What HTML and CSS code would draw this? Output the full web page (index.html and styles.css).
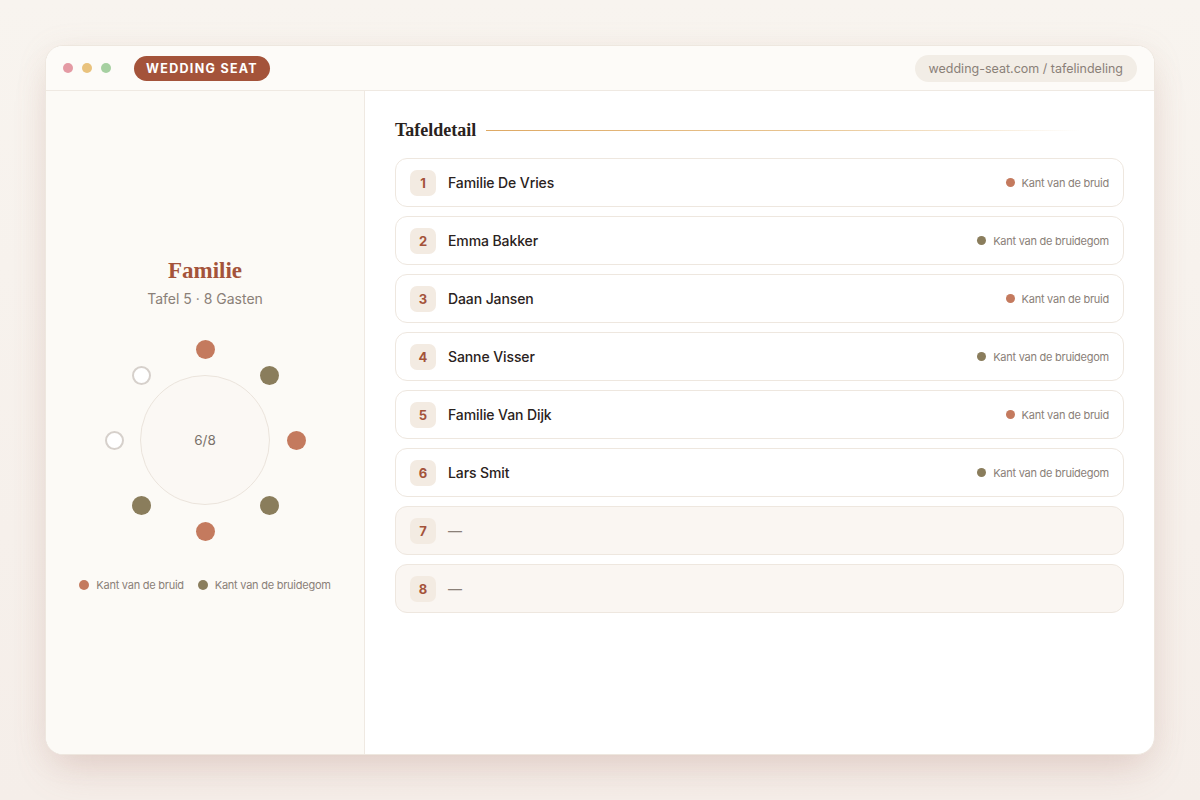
FILE: index.html
```html
<!DOCTYPE html>
<html lang="nl">
<head>
<meta charset="utf-8">
<title>Wedding Seat – Tafelindeling</title>
<link rel="stylesheet" href="styles.css">
</head>
<body>
<div class="window">
  <header class="topbar">
    <div class="dots">
      <span class="dot dot-red"></span>
      <span class="dot dot-yellow"></span>
      <span class="dot dot-green"></span>
    </div>
    <div class="brand">WEDDING SEAT</div>
    <div class="url">wedding-seat.com / tafelindeling</div>
  </header>
  <div class="content">
    <aside class="sidebar">
      <h2 class="table-title">Familie</h2>
      <div class="table-sub">Tafel 5 · 8 Gasten</div>
      <div class="diagram">
        <div class="table-circle">6/8</div>
        <span class="seat bride s-top"></span>
        <span class="seat groom s-tr"></span>
        <span class="seat bride s-right"></span>
        <span class="seat groom s-br"></span>
        <span class="seat bride s-bottom"></span>
        <span class="seat groom s-bl"></span>
        <span class="seat empty s-left"></span>
        <span class="seat empty s-tl"></span>
      </div>
      <div class="legend">
        <span class="legend-item"><span class="ldot bride"></span>Kant van de bruid</span>
        <span class="legend-item"><span class="ldot groom"></span>Kant van de bruidegom</span>
      </div>
    </aside>
    <main class="main">
      <div class="section-head">
        <h3>Tafeldetail</h3>
        <span class="head-line"></span>
      </div>
      <ul class="rows">
        <li class="row"><span class="num">1</span><span class="name">Familie De Vries</span><span class="side"><span class="sdot bride"></span>Kant van de bruid</span></li>
        <li class="row"><span class="num">2</span><span class="name">Emma Bakker</span><span class="side"><span class="sdot groom"></span>Kant van de bruidegom</span></li>
        <li class="row"><span class="num">3</span><span class="name">Daan Jansen</span><span class="side"><span class="sdot bride"></span>Kant van de bruid</span></li>
        <li class="row"><span class="num">4</span><span class="name">Sanne Visser</span><span class="side"><span class="sdot groom"></span>Kant van de bruidegom</span></li>
        <li class="row"><span class="num">5</span><span class="name">Familie Van Dijk</span><span class="side"><span class="sdot bride"></span>Kant van de bruid</span></li>
        <li class="row"><span class="num">6</span><span class="name">Lars Smit</span><span class="side"><span class="sdot groom"></span>Kant van de bruidegom</span></li>
        <li class="row row-empty"><span class="num">7</span><span class="name dash">—</span></li>
        <li class="row row-empty"><span class="num">8</span><span class="name dash">—</span></li>
      </ul>
    </main>
  </div>
</div>
</body>
</html>
```

FILE: styles.css
```css
* { box-sizing: border-box; }
html, body { margin: 0; padding: 0; }
body {
  width: 1200px;
  height: 800px;
  background: linear-gradient(180deg, #f8f4ef 0%, #f5eee9 100%);
  font-family: "Inter", "Liberation Sans", sans-serif;
  color: #2a2220;
  padding: 45px;
  overflow: hidden;
}
.window {
  width: 1110px;
  height: 710px;
  background: #ffffff;
  border: 1px solid #eee7df;
  border-radius: 18px;
  overflow: hidden;
  display: flex;
  flex-direction: column;
  box-shadow: 0 22px 40px -10px rgba(170, 110, 100, 0.22), 0 4px 30px rgba(190, 160, 140, 0.12);
}
.topbar {
  height: 45px;
  flex: none;
  display: flex;
  align-items: center;
  padding: 0 17px 0 17px;
  background: #fdfbf8;
  border-bottom: 1px solid #efe9e2;
}
.dots { display: flex; gap: 9px; }
.dot { width: 10px; height: 10px; border-radius: 50%; display: block; }
.dot-red { background: #e49aa4; }
.dot-yellow { background: #e9c27d; }
.dot-green { background: #a6d0a1; }
.brand {
  margin-left: 23px;
  height: 25px;
  padding: 0 12px;
  border-radius: 13px;
  background: #a4533a;
  color: #fff;
  font-weight: 700;
  font-size: 12.5px;
  letter-spacing: 1.3px;
  display: flex;
  align-items: center;
}
.url {
  margin-left: auto;
  height: 27px;
  padding: 0 14px;
  border-radius: 14px;
  background: #f2ede6;
  color: #8a8078;
  font-size: 12.5px;
  display: flex;
  align-items: center;
}
.content { flex: 1; display: flex; min-height: 0; }
.sidebar {
  width: 319px;
  flex: none;
  background: #fcfaf6;
  border-right: 1px solid #efe9e2;
  display: flex;
  flex-direction: column;
  align-items: center;
  justify-content: center;
  padding-top: 4px;
}
.table-title {
  margin: 0;
  font-family: "Liberation Serif", "DejaVu Serif", serif;
  font-weight: 700;
  font-size: 23px;
  line-height: 28px;
  color: #a4533a;
}
.table-sub {
  margin-top: 5px;
  font-size: 14px;
  line-height: 18px;
  color: #8a8078;
}
.diagram {
  position: relative;
  width: 202px;
  height: 202px;
  margin-top: 31px;
}
.table-circle {
  position: absolute;
  left: 36px;
  top: 36px;
  width: 130px;
  height: 130px;
  border-radius: 50%;
  border: 1px solid #ebe4dc;
  background: #fbf8f4;
  display: flex;
  align-items: center;
  justify-content: center;
  font-size: 13.5px;
  color: #7a716a;
}
.seat {
  position: absolute;
  width: 19px;
  height: 19px;
  border-radius: 50%;
  margin-left: -9.5px;
  margin-top: -9.5px;
}
.bride { background: #c47a5e; }
.groom { background: #8a7d5c; }
.empty { background: #fff; border: 2px solid #d6d0cb; }
.s-top { left: 101px; top: 10px; }
.s-tr { left: 165px; top: 36px; }
.s-right { left: 192px; top: 101px; }
.s-br { left: 165px; top: 166px; }
.s-bottom { left: 101px; top: 192px; }
.s-bl { left: 37px; top: 166px; }
.s-left { left: 10px; top: 101px; }
.s-tl { left: 37px; top: 36px; }
.legend {
  margin-top: 37px;
  display: flex;
  gap: 14px;
  font-size: 11px;
  letter-spacing: -0.25px;
  color: #8a8078;
}
.legend-item { display: flex; align-items: center; gap: 7px; }
.ldot { width: 10px; height: 10px; border-radius: 50%; display: block; }
.main {
  flex: 1;
  padding: 27px 30px 0 30px;
}
.section-head {
  display: flex;
  align-items: center;
  gap: 10px;
  height: 24px;
}
.section-head h3 {
  margin: 0;
  font-family: "Liberation Serif", "DejaVu Serif", serif;
  font-weight: 700;
  font-size: 18px;
  color: #2a2220;
}
.head-line {
  flex: 1;
  height: 1px;
  margin-right: 44px;
  background: linear-gradient(90deg, #dea964 0%, #e8c592 55%, rgba(240, 220, 190, 0) 100%);
}
.rows {
  list-style: none;
  margin: 16px 0 0 0;
  padding: 0;
  display: flex;
  flex-direction: column;
  gap: 9px;
}
.row {
  height: 49px;
  display: flex;
  align-items: center;
  padding: 0 14px 0 14px;
  border: 1px solid #eee7df;
  border-radius: 12px;
  background: #fff;
}
.row-empty { background: #faf6f2; }
.num {
  width: 26px;
  height: 26px;
  border-radius: 7px;
  background: #f3ebe2;
  color: #a4533a;
  font-weight: 700;
  font-size: 13px;
  display: flex;
  align-items: center;
  justify-content: center;
  flex: none;
}
.name {
  margin-left: 12px;
  font-size: 14px;
  letter-spacing: -0.1px;
  font-weight: 500;
  color: #2a2220;
}
.dash { color: #8a8078; font-weight: 400; }
.side {
  margin-left: auto;
  display: flex;
  align-items: center;
  gap: 7px;
  font-size: 11px;
  letter-spacing: -0.25px;
  color: #8a8078;
}
.sdot { width: 9px; height: 9px; border-radius: 50%; display: block; }
```
